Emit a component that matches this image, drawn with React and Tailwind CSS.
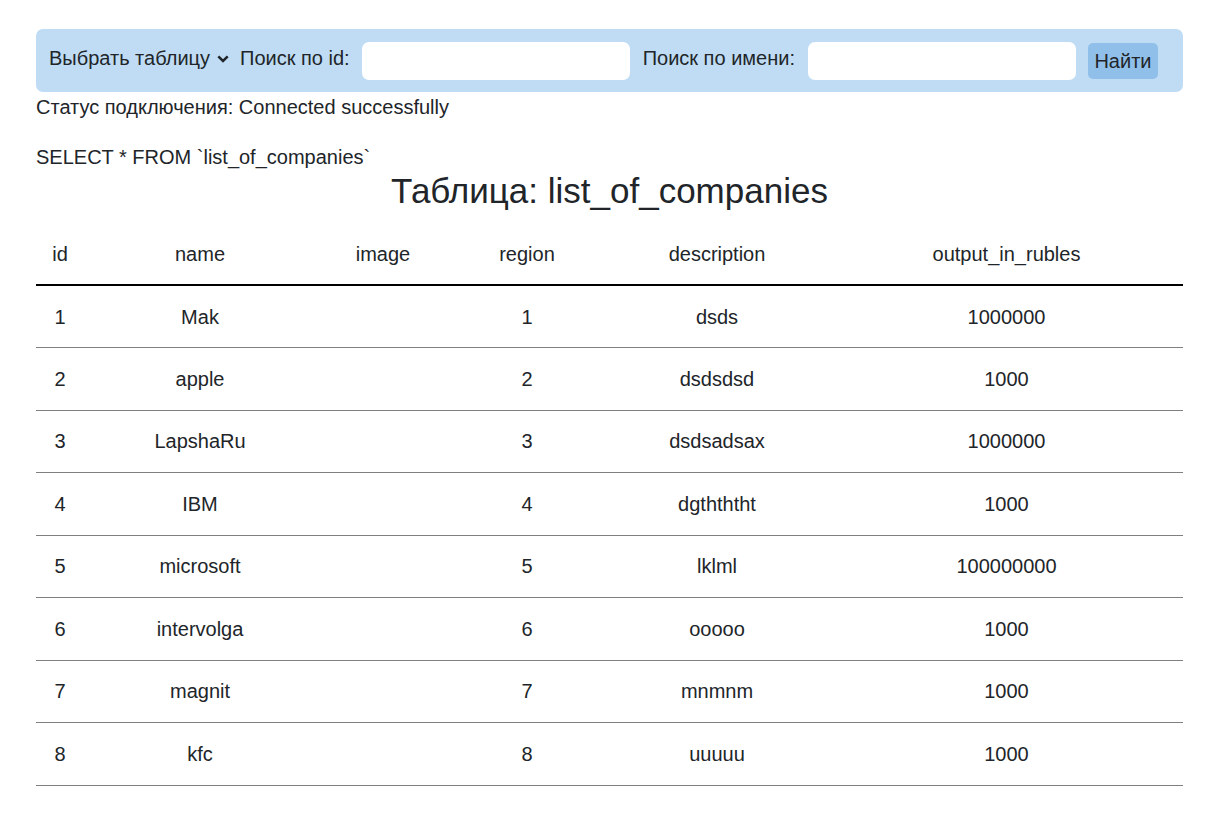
import React from "react";

const rows = [
  ["1", "Mak", "", "1", "dsds", "1000000"],
  ["2", "apple", "", "2", "dsdsdsd", "1000"],
  ["3", "LapshaRu", "", "3", "dsdsadsax", "1000000"],
  ["4", "IBM", "", "4", "dgthththt", "1000"],
  ["5", "microsoft", "", "5", "lklml", "100000000"],
  ["6", "intervolga", "", "6", "ooooo", "1000"],
  ["7", "magnit", "", "7", "mnmnm", "1000"],
  ["8", "kfc", "", "8", "uuuuu", "1000"],
];

const heads = ["id", "name", "image", "region", "description", "output_in_rubles"];
const widths = ["w-[48px]", "w-[232px]", "w-[134px]", "w-[154px]", "w-[226px]", "w-[353px]"];

export default function App() {
  return (
    <div className="min-h-[821px] bg-white text-[#212529] font-['Liberation_Sans',Arial,sans-serif] text-[20px]">
      <div className="ml-[36px] w-[1147px] pt-[29px]">
        <div className="h-[63px] rounded-[7px] bg-[#bfdcf4] flex items-center pl-[13px]">
          <div className="flex items-center pb-[5px]">
            <span>Выбрать таблицу</span>
            <svg className="ml-[7px] mt-[2px]" width="12" height="8" viewBox="0 0 12 8">
              <path d="M1.3 1.4 L6 6 L10.7 1.4" fill="none" stroke="#212529" strokeWidth="2.5" />
            </svg>
          </div>
          <span className="ml-[11px] pb-[5px]">Поиск по id:</span>
          <div className="ml-[12px] w-[268px] h-[38px] bg-white rounded-[7px]" />
          <span className="ml-[13px] pb-[5px]">Поиск по имени:</span>
          <div className="ml-[13px] w-[268px] h-[38px] bg-white rounded-[7px]" />
          <div className="ml-[12px] w-[70px] h-[36px] bg-[#90c0e9] rounded-[5px] flex items-center justify-center">
            Найти
          </div>
        </div>
        <div className="mt-0 leading-[30px]">Статус подключения: Connected successfully</div>
        <div className="mt-[20px] leading-[30px]">SELECT * FROM `list_of_companies`</div>
        <div className="text-center text-[35px] leading-[40px] -mt-[1px]">Таблица: list_of_companies</div>
        <table className="w-[1147px] table-fixed border-collapse mt-[11px]">
          <thead>
            <tr className="h-[63px] border-b-2 border-black">
              {heads.map((h, i) => (
                <th key={h} className={`${widths[i]} font-normal text-center align-middle pt-[2px]`}>{h}</th>
              ))}
            </tr>
          </thead>
          <tbody>
            {rows.map((r, ri) => (
              <tr key={ri} className="h-[62.5px] border-b border-[#808080]">
                {r.map((c, ci) => (
                  <td key={ci} className="text-center align-middle">{c}</td>
                ))}
              </tr>
            ))}
          </tbody>
        </table>
      </div>
    </div>
  );
}
